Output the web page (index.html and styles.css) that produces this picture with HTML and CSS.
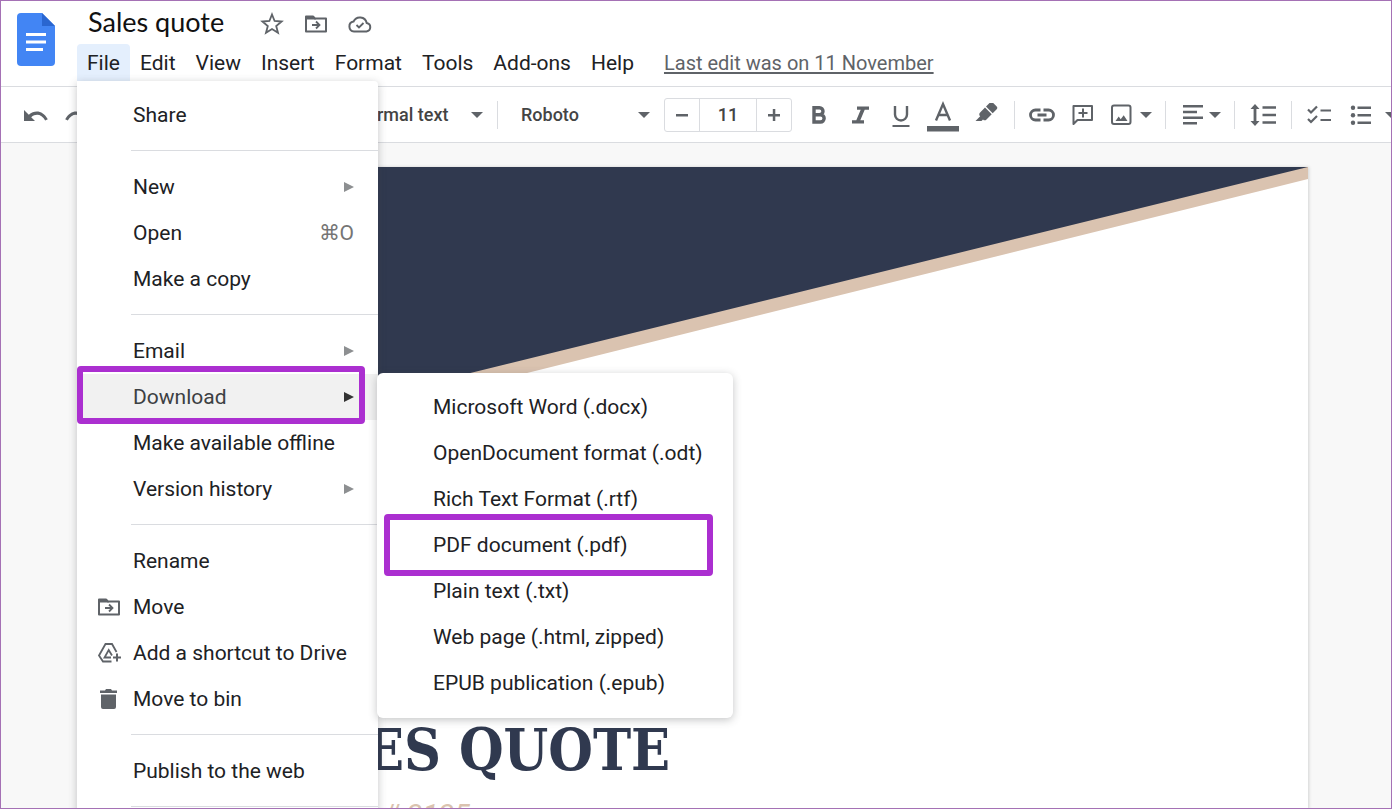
FILE: index.html
```html
<!DOCTYPE html>
<html lang="en">

<head>
    <meta charset="UTF-8">
    <meta name="viewport" content="width=device-width, initial-scale=1.0">
    <title>Sales quote - Docs</title>
    <link rel="stylesheet" href="styles.css">
</head>

<body>
    <!-- shared icons -->
    <svg class="sprite" aria-hidden="true">
        <symbol id="caret" viewBox="0 0 12 6">
            <path d="M0 0h12L6 6z" />
        </symbol>
        <symbol id="arrow" viewBox="0 0 10 10">
            <path d="M0 0l10 5-10 5z" />
        </symbol>
        <symbol id="move" viewBox="0 0 24 24">
            <path fill="none" stroke="currentColor" stroke-width="2" d="M2 4.500V19.500h20V6.500H11L9 4.500z" stroke-linejoin="round" />
            <path d="M2 4h7l3 3.500H2z" />
            <path fill="none" stroke="currentColor" stroke-width="1.800" d="M8 13h7M12 9.500l3.500 3.500-3.500 3.500" />
        </symbol>
    </svg>

    <header class="header">
        <svg class="logo" viewBox="0 0 38 53" role="img" aria-label="Docs">
            <path fill="#4285f4" d="M4 0h21l13 13v36a4 4 0 0 1-4 4H4a4 4 0 0 1-4-4V4a4 4 0 0 1 4-4z" />
            <path fill="#2a66d0" d="M25 0l13 13H25z" />
            <path fill="#fff" d="M9 20h20v3H9zM9 27.500h20v3H9zM9 35h17v3H9z" />
        </svg>
        <div class="header_main">
            <div class="title_row">
                <h1 class="title">Sales quote</h1>
                <button class="title_button" aria-label="Star">
                    <svg class="icon" viewBox="0 0 24 24">
                        <path fill="none" stroke="currentColor" stroke-width="1.800" d="M12 2.500l2.600 6.500 7 .500-5.400 4.500 1.800 6.800L12 17.100l-6 3.700 1.800-6.800L2.400 9.500l7-.500z" />
                    </svg>
                </button>
                <button class="title_button" aria-label="Move">
                    <svg class="icon"><use href="#move" /></svg>
                </button>
                <button class="title_button" aria-label="Document status">
                    <svg class="icon" viewBox="0 0 24 24">
                        <path fill="none" stroke="currentColor" stroke-width="2" d="M6 19.500a5 5 0 0 1-.500-9.900 7 7 0 0 1 13.200 1.400A4.300 4.300 0 0 1 18.500 19.500z" />
                        <path fill="none" stroke="currentColor" stroke-width="1.800" d="M8.500 13l2.500 2.500 4.500-4.500" />
                    </svg>
                </button>
            </div>
            <nav class="menubar">
                <div class="menubar_item">
                    <button class="menubar_button menubar_button_open">File</button>
                    <ul class="menu">
                        <li><button class="menu_item">Share</button></li>
                        <li class="separator"></li>
                        <li><button class="menu_item">New<svg class="menu_arrow"><use href="#arrow" /></svg></button></li>
                        <li><button class="menu_item">Open<span class="shortcut">⌘O</span></button></li>
                        <li><button class="menu_item">Make a copy</button></li>
                        <li class="separator"></li>
                        <li><button class="menu_item">Email<svg class="menu_arrow"><use href="#arrow" /></svg></button></li>
                        <li class="marked marked_download">
                            <button class="menu_item menu_item_active">Download<svg class="menu_arrow"><use href="#arrow" /></svg></button>
                            <ul class="menu submenu">
                                <li><button class="menu_item">Microsoft Word (.docx)</button></li>
                                <li><button class="menu_item">OpenDocument format (.odt)</button></li>
                                <li><button class="menu_item">Rich Text Format (.rtf)</button></li>
                                <li class="marked marked_pdf"><button class="menu_item">PDF document (.pdf)</button></li>
                                <li><button class="menu_item">Plain text (.txt)</button></li>
                                <li><button class="menu_item">Web page (.html, zipped)</button></li>
                                <li><button class="menu_item">EPUB publication (.epub)</button></li>
                            </ul>
                        </li>
                        <li><button class="menu_item">Make available offline</button></li>
                        <li><button class="menu_item">Version history<svg class="menu_arrow"><use href="#arrow" /></svg></button></li>
                        <li class="separator"></li>
                        <li><button class="menu_item">Rename</button></li>
                        <li>
                            <button class="menu_item">
                                <svg class="icon menu_icon"><use href="#move" /></svg>Move
                            </button>
                        </li>
                        <li>
                            <button class="menu_item">
                                <svg class="icon menu_icon" viewBox="0 0 24 24">
                                    <path fill="none" stroke="currentColor" stroke-width="1.800" d="M14.500 20.500H6L2 14.500 8.500 3h6.500l4.500 8M14 16.500H7.500L11.700 9l3.300 5.500" />
                                    <path fill="none" stroke="currentColor" stroke-width="2" d="M20 12.500v8M16 16.500h8" />
                                </svg>Add a shortcut to Drive
                            </button>
                        </li>
                        <li>
                            <button class="menu_item">
                                <svg class="icon menu_icon" viewBox="0 0 24 24">
                                    <path d="M3 3.500h5l1-1.500h5l1 1.500h5V6H3zM4 7.500h15V20a2 2 0 0 1-2 2H6a2 2 0 0 1-2-2z" />
                                </svg>Move to bin
                            </button>
                        </li>
                        <li class="separator"></li>
                        <li><button class="menu_item">Publish to the web</button></li>
                        <li class="separator"></li>
                    </ul>
                </div>
                <button class="menubar_button">Edit</button>
                <button class="menubar_button">View</button>
                <button class="menubar_button">Insert</button>
                <button class="menubar_button">Format</button>
                <button class="menubar_button">Tools</button>
                <button class="menubar_button">Add-ons</button>
                <button class="menubar_button">Help</button>
                <a class="last_edit" href="#">Last edit was on 11 November</a>
            </nav>
        </div>
    </header>

    <div class="toolbar">
        <div class="group">
            <button class="tool" aria-label="Undo">
                <svg class="icon" viewBox="0 0 24 24">
                    <path d="M0 7v11h11l-3.800-3.800c5-4 10.500-2.800 14 3.300l2.600-1.200C19 7.500 11 6.500 4.800 11.800z" />
                </svg>
            </button>
            <button class="tool" aria-label="Redo">
                <svg class="icon" viewBox="0 0 24 24">
                    <path d="M24 7v11H13l3.800-3.800c-5-4-10.500-2.800-14 3.300L.200 16.300C5 7.500 13 6.500 19.200 11.800z" />
                </svg>
            </button>
            <div class="picker picker_zoom">
                <select aria-label="Zoom"><option>100%</option></select>
                <svg class="caret"><use href="#caret" /></svg>
            </div>
        </div>
        <span class="divider"></span>
        <div class="picker picker_style">
            <select aria-label="Styles"><option>Normal text</option></select>
            <svg class="caret"><use href="#caret" /></svg>
        </div>
        <span class="divider"></span>
        <div class="picker picker_font">
            <select aria-label="Font"><option>Roboto</option></select>
            <svg class="caret"><use href="#caret" /></svg>
        </div>
        <div class="font_size">
            <button aria-label="Decrease font size">
                <svg viewBox="0 0 12 12"><path d="M0 5h12v2.500H0z" /></svg>
            </button>
            <input type="text" value="11" aria-label="Font size">
            <button aria-label="Increase font size">
                <svg viewBox="0 0 12 12"><path d="M0 5h12v2.500H0zM4.800 0h2.500v12H4.800z" /></svg>
            </button>
        </div>
        <div class="group">
            <button class="tool" aria-label="Bold">
                <svg class="icon" viewBox="0 0 24 24">
                    <path fill="none" stroke="currentColor" stroke-width="3.400" d="M7 4.700h5.500a3.400 3.400 0 0 1 0 7H7M7 11.700h6.500a3.600 3.600 0 0 1 0 7.300H7V3" />
                </svg>
            </button>
            <button class="tool" aria-label="Italic">
                <svg class="icon" viewBox="0 0 24 24">
                    <path d="M9 3.500h12v3.200h-4.300l-4.400 10.600H16v3.200H4v-3.200h4.300l4.400-10.600H9z" />
                </svg>
            </button>
            <button class="tool" aria-label="Underline">
                <svg class="icon" viewBox="0 0 24 24">
                    <path fill="none" stroke="currentColor" stroke-width="2.400" d="M6 3v8.500a6 6 0 0 0 12 0V3" />
                    <path d="M3.500 22h17v2.200h-17z" />
                </svg>
            </button>
            <button class="tool tool_wide" aria-label="Text colour">
                <svg class="icon icon_large" viewBox="0 0 32 32">
                    <path fill="none" stroke="currentColor" stroke-width="2.400" d="M9 21.500L16 5l7 16.500M11.500 16h9" />
                    <path d="M0 27h32v5.500H0z" />
                </svg>
            </button>
            <button class="tool tool_wide" aria-label="Highlight colour">
                <svg class="icon" viewBox="0 0 24 24">
                    <path d="M12 3.500l4-4a2 2 0 0 1 2.700 0l4 4a2 2 0 0 1 0 2.700l-4 4zM11 4.600l6.700 6.600-5.200 5.200a2.500 2.500 0 0 1-3.500 0L7.500 18h-6l4.700-4.800a2.500 2.500 0 0 1-.300-3.400z" />
                </svg>
            </button>
        </div>
        <span class="divider"></span>
        <div class="group">
            <button class="tool" aria-label="Insert link">
                <svg class="icon icon_link" viewBox="0 0 26 24">
                    <path fill="none" stroke="currentColor" stroke-width="2.800" d="M11.500 7H6.500a5 5 0 0 0 0 10h5M14.500 7h5a5 5 0 0 1 0 10h-5M8.500 12h9" />
                </svg>
            </button>
            <button class="tool" aria-label="Add comment">
                <svg class="icon" viewBox="0 0 24 24">
                    <path fill="none" stroke="currentColor" stroke-width="2" stroke-linejoin="round" d="M2.500 3h18.500v14H6.500l-4 4z" />
                    <path fill="none" stroke="currentColor" stroke-width="2" d="M12 5.500v9M7.500 10h9" />
                </svg>
            </button>
            <button class="tool tool_menu" aria-label="Insert image">
                <svg class="icon" viewBox="0 0 24 24">
                    <rect fill="none" stroke="currentColor" stroke-width="2" x="2" y="2.500" width="18.500" height="18.500" rx="2" />
                    <path d="M5.500 18l3.200-4.500 2 2.700 3-4 3.800 5.800z" />
                </svg>
                <svg class="caret"><use href="#caret" /></svg>
            </button>
        </div>
        <span class="divider"></span>
        <button class="tool tool_menu" aria-label="Align">
            <svg class="icon" viewBox="0 0 24 24">
                <path d="M4 2h20v2.500H4zM4 7.700h14v2.500H4zM4 13.400h20v2.500H4zM4 19.100h14v2.500H4z" />
            </svg>
            <svg class="caret"><use href="#caret" /></svg>
        </button>
        <span class="divider"></span>
        <button class="tool tool_wide" aria-label="Line spacing">
            <svg class="icon icon_link" viewBox="0 0 26 24">
                <path d="M12.500 3.200H26v2.500H12.500zM12.500 10.700H26v2.500H12.500zM12.500 18.200H26v2.500H12.500zM5 1l4.500 5H6.400v12h3.100L5 23 .5 18h3.100V6H.5z" />
            </svg>
        </button>
        <span class="divider"></span>
        <div class="group">
            <button class="tool" aria-label="Checklist">
                <svg class="icon" viewBox="0 0 24 24">
                    <path fill="none" stroke="currentColor" stroke-width="2.200" d="M1 6.500l3 3L10 3.500M1 16l3 3 6-6M13.500 7.500H24M13.500 17H24" />
                </svg>
            </button>
            <button class="tool tool_wide" aria-label="Bulleted list">
                <svg class="icon" viewBox="0 0 24 24">
                    <path d="M8.500 3.500H22V6H8.500zM8.500 11H22v2.500H8.500zM8.500 18.500H22V21H8.500z" />
                    <circle cx="4" cy="4.700" r="2.200" />
                    <circle cx="4" cy="12.200" r="2.200" />
                    <circle cx="4" cy="19.700" r="2.200" />
                </svg>
            </button>
            <button class="tool tool_caret" aria-label="Bulleted list options">
                <svg class="caret"><use href="#caret" /></svg>
            </button>
        </div>
    </div>

    <main class="canvas">
        <article class="page">
            <svg class="banner" viewBox="0 0 1224 316" preserveAspectRatio="none" aria-hidden="true">
                <path fill="#dac3b0" d="M0 0h1224v12L0 316z" />
                <path fill="#30394f" d="M0 0h1224L0 301z" />
            </svg>
            <h2 class="page_title">SALES QUOTE</h2>
            <p class="page_number">Quote # 3135</p>
        </article>
    </main>
</body>

</html>
```
FILE: styles.css
```css
* {
    box-sizing: border-box;
}

html,
body {
    height: 100%;
    margin: 0;
}

body {
    display: flex;
    flex-direction: column;
    overflow: hidden;
    background: #f8f8f8;
    color: #202124;
    font-family: Roboto, "Liberation Sans", sans-serif;
    font-size: 21px;
}

/* thin frame round the whole window */
body::after {
    content: "";
    position: fixed;
    inset: 0;
    border: 1px solid #a571b5;
    pointer-events: none;
    z-index: 10;
}

button,
input,
select {
    margin: 0;
    padding: 0;
    border: 0;
    background: none;
    color: inherit;
    font: inherit;
}

ul {
    margin: 0;
    padding: 0;
    list-style: none;
}

svg {
    display: block;
    flex: none;
    fill: currentColor;
}

.sprite {
    position: absolute;
    width: 0;
    height: 0;
}

.icon {
    width: 24px;
    height: 24px;
}

.icon_link {
    width: 26px;
}

.icon_large {
    width: 32px;
    height: 32px;
    overflow: visible;
}

.caret {
    width: 12px;
    height: 6px;
}

/* header */
.header {
    display: flex;
    flex: none;
    height: 87px;
    padding: 4px 17px 0;
    background: #fff;
    border-bottom: 1px solid #dadce0;
}

.logo {
    width: 38px;
    height: 53px;
    margin: 9px 22px 0 0;
}

.title_row {
    display: flex;
    align-items: center;
    height: 40px;
    gap: 20px;
    padding-left: 11px;
}

.title {
    margin: 0 16px 0 0;
    padding-bottom: 4px;
    color: #111;
    font-family: Lato, sans-serif;
    font-size: 27px;
    font-weight: 400;
    line-height: 32px;
}

.title_button {
    color: #5f6368;
}

.menubar {
    display: flex;
    align-items: center;
}

.menubar_item {
    position: relative;
}

.menubar_button {
    height: 37px;
    padding: 0 10px;
    white-space: nowrap;
}

.menubar_button_open {
    display: block;
    background: #e4effd;
    border-radius: 4px 4px 0 0;
}

.last_edit {
    margin-left: 20px;
    color: #5f6368;
    font-size: 20px;
    white-space: nowrap;
    text-underline-offset: 2px;
}

/* file menu */
.menu {
    position: absolute;
    top: 37px;
    left: 0;
    width: 301px;
    padding: 11px 0;
    background: #fff;
    border-radius: 0 4px 4px 4px;
    box-shadow: 0 2px 8px rgba(60, 64, 67, 0.3);
    z-index: 2;
}

.menu_item {
    display: flex;
    align-items: center;
    position: relative;
    width: 100%;
    height: 46px;
    padding: 0 24px 0 56px;
    white-space: nowrap;
}

.menu_item_active {
    background: #f1f1f1;
    color: #3c4043;
}

.menu_arrow {
    width: 10px;
    height: 10px;
    margin-left: auto;
    color: #8d8f91;
}

.menu_item_active .menu_arrow {
    color: #333;
}

.menu_icon {
    margin: 0 12px 0 -36px;
    color: #5f6368;
}

.shortcut {
    margin-left: auto;
    color: #757575;
}

.separator {
    height: 1px;
    margin: 12px 0 13px 54px;
    background: #dadce0;
}

.submenu {
    top: -1px;
    left: 300px;
    width: 356px;
    padding: 11px 0 12px;
    border-radius: 6px;
}

/* purple callouts */
.marked {
    position: relative;
}

.marked::after {
    content: "";
    position: absolute;
    border: 6px solid #ab2fd0;
    border-radius: 4px;
    pointer-events: none;
}

.marked_download::after {
    inset: -8px 13px -4px 0;
}

.marked_pdf::after {
    inset: -8px 20px -8px 7px;
}

/* toolbar */
.toolbar {
    display: flex;
    flex: none;
    align-items: center;
    height: 56px;
    padding-left: 16px;
    overflow: hidden;
    background: #fff;
    border-bottom: 1px solid #dadce0;
    color: #5f6368;
}

.group {
    display: flex;
    flex: none;
    gap: 1px;
}

.tool {
    display: flex;
    flex: none;
    align-items: center;
    justify-content: center;
    width: 40px;
    height: 40px;
}

.tool_wide {
    width: 42px;
}

.tool_menu {
    gap: 6px;
    width: 54px;
}

.tool_caret {
    width: 16px;
}

.divider {
    flex: none;
    width: 1px;
    height: 28px;
    margin: 0 7px;
    background: #dadce0;
}

.picker {
    display: flex;
    flex: none;
    align-items: center;
    padding-right: 7px;
    color: #5f6368;
}

.picker select {
    flex: 1;
    height: 40px;
    appearance: none;
    color: #444;
    font-size: 18px;
    font-weight: 500;
}

.picker_zoom {
    width: 234px;
}

.picker_style {
    width: 143px;
    padding-left: 7px;
}

.picker_font {
    width: 152px;
    padding-left: 16px;
}

.font_size {
    display: flex;
    flex: none;
    width: 128px;
    height: 34px;
    margin: 0 7px;
    border: 1px solid #dadce0;
    border-radius: 3px;
}

.font_size button {
    display: flex;
    align-items: center;
    justify-content: center;
    width: 34px;
}

.font_size svg {
    width: 12px;
    height: 12px;
}

.font_size input {
    flex: 1;
    min-width: 0;
    border: solid #dadce0;
    border-width: 0 1px;
    color: #444;
    font-size: 18px;
    font-weight: 500;
    text-align: center;
}

/* document */
.canvas {
    flex: 1;
    min-height: 0;
    padding: 24px 84px 0;
}

.page {
    height: 100%;
    overflow: hidden;
    background: #fff;
    box-shadow: 1px 0 3px rgba(60, 64, 67, 0.2);
}

.banner {
    width: 100%;
    height: 316px;
}

.page_title {
    margin: 232px 0 0 168px;
    color: #30394f;
    font-family: "DejaVu Serif Condensed", "Liberation Serif", serif;
    font-size: 57px;
    font-weight: 700;
    line-height: 70px;
}

.page_number {
    margin: 12px 0 0 216px;
    color: #dac3b0;
    font-size: 29px;
    font-style: italic;
    line-height: 36px;
}
```
